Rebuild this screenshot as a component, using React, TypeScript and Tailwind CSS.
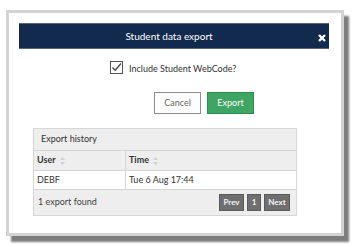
import React from 'react';

const SortIcon: React.FC = () => (
  <svg width="5" height="8" viewBox="0 0 5 8" className="ml-[4px] mt-[1px]">
    <path d="M2.5 0 L5 3 L0 3 Z" fill="#d2d2d2" />
    <path d="M2.5 8 L5 5 L0 5 Z" fill="#d2d2d2" />
  </svg>
);

const PageButton: React.FC<{ label: string; width: string }> = ({ label, width }) => (
  <button
    className={`${width} h-[17px] bg-[#6f6f6f] border border-[#5a5a5a] text-[#f2f2f2] text-[8px] font-bold flex items-center justify-center`}
  >
    {label}
  </button>
);

export default function App() {
  return (
    <div className="w-[357px] h-[246px] bg-white font-['Lato',sans-serif] pt-[10px] pl-[6px]">
      <div className="w-[338px] h-[226px] border-[3px] border-[#d3d3d3] bg-white shadow-[5px_6px_2px_#7d7d7d] pt-[10px] pl-[10px] pr-[12px]">
        <div className="h-[26px] bg-[#132a4f] border-y border-[#5c6470] flex items-center relative">
          <span className="flex-1 text-center text-white text-[10px] pr-[10px]">Student data export</span>
          <svg width="8" height="8" viewBox="0 0 8 8" className="absolute right-[3px] top-[10px]">
            <path d="M1 1 L7 7 M7 1 L1 7" stroke="white" strokeWidth="2.4" strokeLinecap="butt" />
          </svg>
        </div>

        <div className="flex items-center mt-[11px] pl-[91px]">
          <svg width="13" height="13" viewBox="0 0 13 13">
            <rect x="0.5" y="0.5" width="12" height="12" fill="white" stroke="#555" />
            <path d="M2.5 6.5 L5.2 9.2 L11 2.5" stroke="#444" strokeWidth="1.3" fill="none" />
          </svg>
          <span className="ml-[6px] mt-[2px] text-[9px] text-[#333]">Include Student WebCode?</span>
        </div>

        <div className="flex gap-[6px] mt-[16px] pl-[135px]">
          <button className="w-[47px] h-[22px] bg-white border border-[#8c8c8c] text-[#666] text-[9px]">
            Cancel
          </button>
          <button className="w-[47px] h-[22px] bg-[#3ea563] border border-[#2f8a50] text-white text-[9px]">
            Export
          </button>
        </div>

        <div className="mt-[14px] ml-[14px] w-[264px] border border-[#d6d6d6] text-[9px] text-[#333]">
          <div className="h-[22px] bg-[#eeeeee] border-b border-[#d6d6d6] flex items-center pl-[7px]">
            Export history
          </div>
          <div className="grid grid-cols-[92px_1fr] h-[20px] bg-[#eeeeee] border-b border-[#d6d6d6] font-bold">
            <div className="flex items-center pl-[3px] border-r border-[#d6d6d6]">
              User
              <SortIcon />
            </div>
            <div className="flex items-center pl-[3px]">
              Time
              <SortIcon />
            </div>
          </div>
          <div className="grid grid-cols-[92px_1fr] h-[19px] bg-white border-b border-[#d6d6d6]">
            <div className="flex items-center pl-[3px] border-r border-[#d6d6d6]">DEBF</div>
            <div className="flex items-center pl-[3px]">Tue 6 Aug 17:44</div>
          </div>
          <div className="h-[25px] bg-[#eeeeee] flex items-center justify-between pl-[4px] pr-[6px]">
            <span className="text-[#444]">1 export found</span>
            <div className="flex gap-[3px]">
              <PageButton label="Prev" width="w-[25px]" />
              <PageButton label="1" width="w-[14px]" />
              <PageButton label="Next" width="w-[26px]" />
            </div>
          </div>
        </div>
      </div>
    </div>
  );
}
